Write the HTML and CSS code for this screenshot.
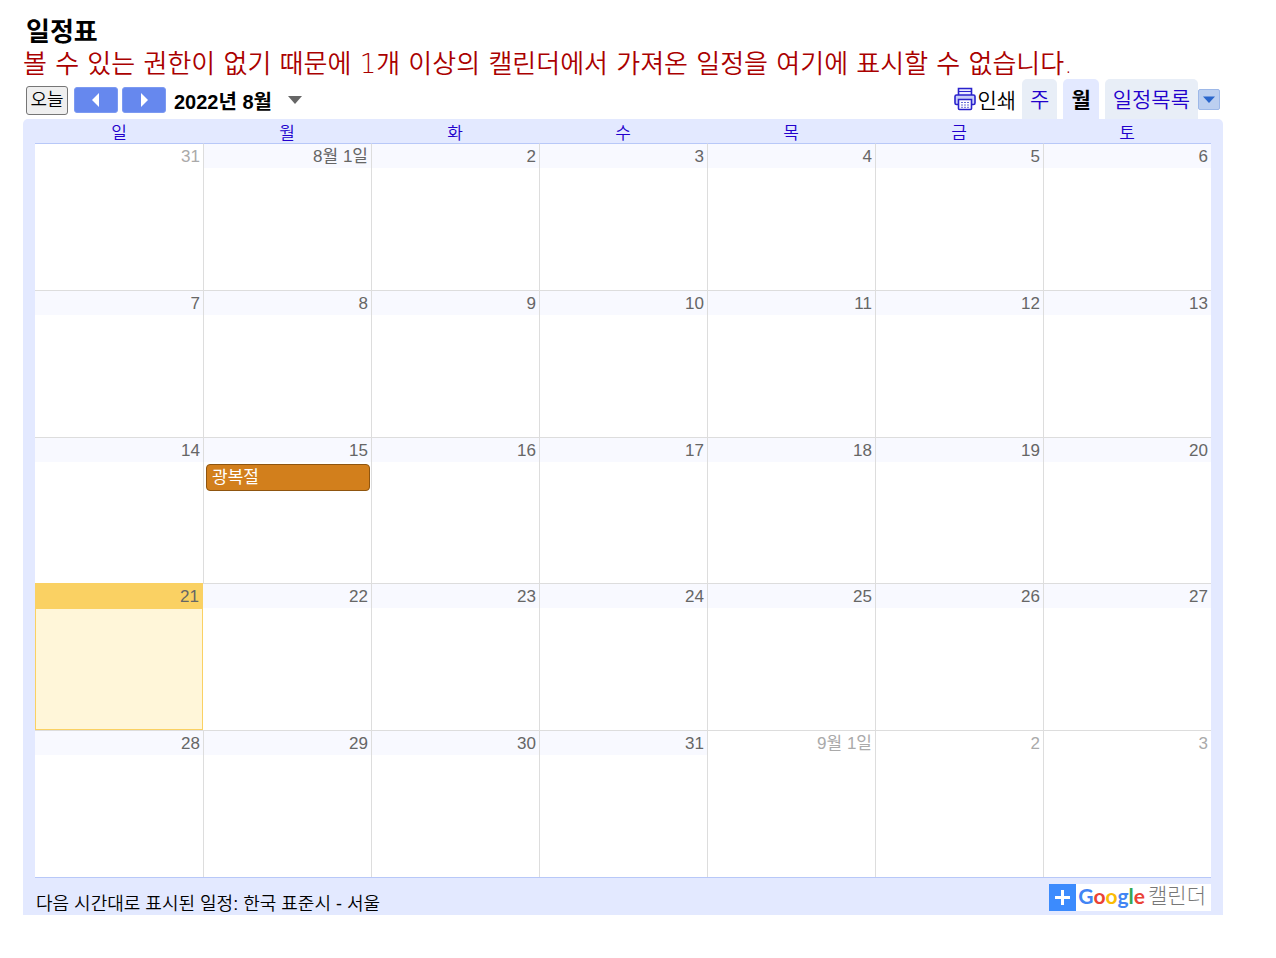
FILE: index.html
```html
<!DOCTYPE html>
<html lang="ko">
<head>
  <meta charset="UTF-8">
  <title>일정표</title>
  <link rel="stylesheet" href="styles.css">
</head>
<body>
  <header>
    <h1>일정표</h1>
    <p class="error">볼 수 있는 권한이 없기 때문에 1개 이상의 캘린더에서 가져온 일정을 여기에 표시할 수 없습니다.</p>
  </header>

  <nav class="toolbar">
    <button type="button" class="today-btn">오늘</button>
    <button type="button" class="nav-btn" aria-label="이전"><svg width="10" height="14" viewBox="0 0 10 14"><path d="M8 0v14L1 7z" fill="#fff"/></svg></button>
    <button type="button" class="nav-btn" aria-label="다음"><svg width="10" height="14" viewBox="0 0 10 14"><path d="M2 0v14l7-7z" fill="#fff"/></svg></button>
    <button type="button" class="month-btn">2022년 8월 <svg width="14" height="8" viewBox="0 0 14 8"><path d="M0 0h14L7 8z" fill="#666"/></svg></button>

    <div class="views">
      <a href="#" class="print">
        <svg width="22" height="24" viewBox="0 0 22 24" fill="none" stroke="#2a22cc" stroke-width="1.6">
          <path d="M4.500 8V1.500h13V8" fill="#e8eaff"/>
          <path d="M4.500 4.500h13" stroke-width="1"/>
          <path d="M4.500 17.500H2.500Q1 17.500 1 16V9.500Q1 8 2.500 8h17Q21 8 21 9.500V16q0 1.500-1.500 1.500h-2" fill="#c9cef8"/>
          <path d="M4.500 12.500h13v9q0 1-1 1h-11q-1 0-1-1z" fill="#fff"/>
          <path d="M7 15.500h8M7 18h8M7 20.300h8" stroke-width="1" stroke-dasharray="2 1" stroke="#6a70d8"/>
        </svg>인쇄</a>
      <a href="#" class="tab">주</a>
      <a href="#" class="tab active">월</a>
      <a href="#" class="tab">일정목록</a>
      <button type="button" class="more-btn" aria-label="캘린더 목록"><svg width="12" height="8" viewBox="0 0 12 8"><path d="M0 0.500h12L6 7z" fill="#2a66cc"/></svg></button>
    </div>
  </nav>

  <main class="calendar">
    <table>
      <thead>
        <tr><th>일</th><th>월</th><th>화</th><th>수</th><th>목</th><th>금</th><th>토</th></tr>
      </thead>
      <tbody>
        <tr>
          <td class="other"><div class="day">31</div></td>
          <td><div class="day">8월 1일</div></td>
          <td><div class="day">2</div></td>
          <td><div class="day">3</div></td>
          <td><div class="day">4</div></td>
          <td><div class="day">5</div></td>
          <td><div class="day">6</div></td>
        </tr>
        <tr>
          <td><div class="day">7</div></td>
          <td><div class="day">8</div></td>
          <td><div class="day">9</div></td>
          <td><div class="day">10</div></td>
          <td><div class="day">11</div></td>
          <td><div class="day">12</div></td>
          <td><div class="day">13</div></td>
        </tr>
        <tr>
          <td><div class="day">14</div></td>
          <td><div class="day">15</div><a href="#" class="event">광복절</a></td>
          <td><div class="day">16</div></td>
          <td><div class="day">17</div></td>
          <td><div class="day">18</div></td>
          <td><div class="day">19</div></td>
          <td><div class="day">20</div></td>
        </tr>
        <tr>
          <td class="today"><div class="day">21</div></td>
          <td><div class="day">22</div></td>
          <td><div class="day">23</div></td>
          <td><div class="day">24</div></td>
          <td><div class="day">25</div></td>
          <td><div class="day">26</div></td>
          <td><div class="day">27</div></td>
        </tr>
        <tr>
          <td><div class="day">28</div></td>
          <td><div class="day">29</div></td>
          <td><div class="day">30</div></td>
          <td><div class="day">31</div></td>
          <td class="other"><div class="day">9월 1일</div></td>
          <td class="other"><div class="day">2</div></td>
          <td class="other"><div class="day">3</div></td>
        </tr>
      </tbody>
    </table>

    <footer>
      <span class="timezone">다음 시간대로 표시된 일정: 한국 표준시 - 서울</span>
      <a href="#" class="google">
        <svg class="plus" width="27" height="27" viewBox="0 0 27 27"><path fill="#3c8bfd" d="M0 0h27v27H0z"/><path d="M13.500 6v15M6 13.500h15" stroke="#fff" stroke-width="3"/></svg>
        <span class="logo"><span class="blue">G</span><span class="red">o</span><span class="yellow">o</span><span class="blue">g</span><span class="green">l</span><span class="red">e</span></span>
        <span class="product">캘린더</span>
      </a>
    </footer>
  </main>
</body>
</html>
```

FILE: styles.css
```css
body {
  margin: 17px 53px 16px 23px;
  background: #fff;
  color: #000;
  font-family: "Liberation Sans", "Noto Sans CJK KR", sans-serif;
  font-size: 16px;
}
a { text-decoration: none; }
button { font-family: inherit; padding: 0; cursor: pointer; }

h1 { margin: 0; padding-left: 3px; font-size: 26px; line-height: 30px; }
.error {
  margin: 0;
  color: #a00;
  font-family: "DejaVu Sans", "Noto Sans CJK KR", sans-serif;
  font-size: 26px;
  font-weight: 350;
  line-height: 34px;
  white-space: nowrap;
}

.toolbar { display: flex; align-items: center; gap: 4px; height: 38px; padding: 0 3px; }
.today-btn {
  width: 42px;
  height: 29px;
  margin-right: 2px;
  background: #efefef;
  border: 1px solid #767676;
  border-radius: 3px;
  font-size: 18px;
  font-weight: 350;
  line-height: 26px;
}
.nav-btn {
  display: flex;
  align-items: center;
  justify-content: center;
  width: 44px;
  height: 26px;
  background: #6688ee;
  border: 1px solid #7c9af2;
  border-radius: 3px;
}
.month-btn {
  display: flex;
  align-items: center;
  gap: 16px;
  margin-left: 4px;
  background: none;
  border: none;
  font-size: 20px;
  font-weight: bold;
}

.views { display: flex; align-items: flex-end; gap: 6px; height: 40px; margin: -2px 0 0 auto; }
.print { display: flex; align-items: center; gap: 1px; height: 40px; color: #000; font-size: 21px; font-weight: 350; }
.tab {
  box-sizing: border-box;
  height: 40px;
  padding: 0 8px;
  background: #e8eef7;
  border-radius: 5px 5px 0 0;
  color: #20c;
  font-size: 21px;
  font-weight: 350;
  line-height: 42px;
}
.tab.active { background: #e3e9ff; color: #000; font-weight: bold; }
.more-btn {
  display: flex;
  align-items: center;
  justify-content: center;
  width: 22px;
  height: 21px;
  margin: 0 0 9px -6px;
  background: #bccff0;
  border: 1px solid #9db8e8;
  border-radius: 2px;
}

.calendar { padding: 0 12px; background: #e3e9ff; border-radius: 5px 5px 0 0; }
table { width: 100%; table-layout: fixed; border-collapse: separate; border-spacing: 0; border-bottom: 1px solid #b8c8f8; }
th {
  box-sizing: border-box;
  height: 24px;
  padding: 6px 0 0;
  color: #20c;
  font-size: 17px;
  font-weight: 350;
  line-height: 18px;
}
td {
  box-sizing: border-box;
  height: 147px;
  padding: 0;
  background: #fff;
  border-top: 1px solid #ddd;
  border-left: 1px solid #ddd;
  vertical-align: top;
}
td:first-child { border-left: none; }
tbody tr:first-child td { border-top-color: #b8c8f8; }
tbody tr:nth-child(3) td { height: 146px; }
.day { height: 24px; padding-right: 3px; background: #f8f9ff; color: #666; font-size: 17px; line-height: 25px; text-align: right; }
.other .day { background: #fff; color: #aaa; }
td.today, td.today:first-child { background: #fff6d9; border: 1px solid #fad163; }
td.today + td { border-left: none; }
.today .day { height: 25px; background: #fad163; line-height: 26px; }
.event {
  display: block;
  margin: 2px 1px 0 2px;
  padding-left: 5px;
  background: #d27f1c;
  border: 1px solid #8f550f;
  border-radius: 4px;
  color: #fff;
  font-size: 17px;
  line-height: 25px;
}

footer { display: flex; justify-content: space-between; align-items: flex-start; height: 37px; }
.timezone { padding: 15px 0 0 1px; font-size: 18px; font-weight: 350; line-height: 22px; }
.google { display: flex; align-items: center; height: 27px; margin-top: 6px; padding-right: 5px; background: #fff; font-size: 21px; line-height: 24px; }
.logo { height: 27px; margin: 0 3px 0 2px; font-family: Lato, sans-serif; font-weight: bold; }
.product { height: 27px; color: #777; font-weight: 300; }
.blue { color: #4285f4; }
.red { color: #ea4335; }
.yellow { color: #fbbc05; }
.green { color: #34a853; }
```
